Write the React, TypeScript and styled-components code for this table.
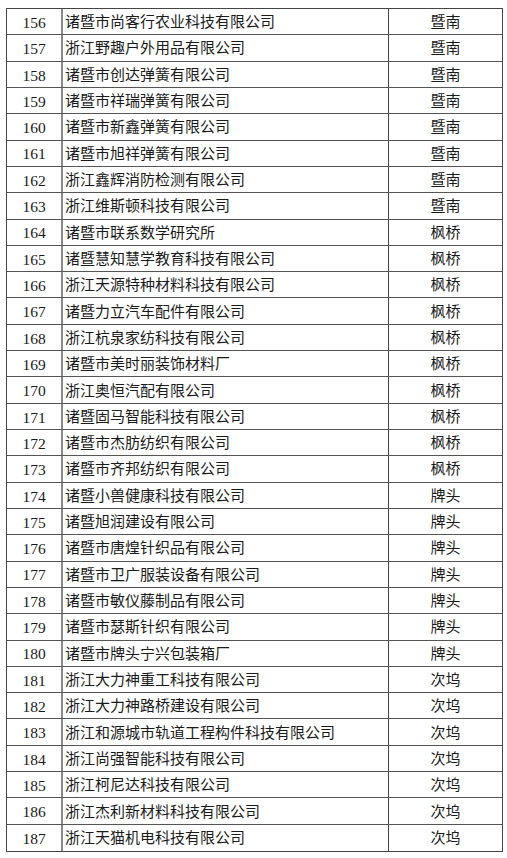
import React from "react";
import styled, { createGlobalStyle } from "styled-components";

const Global = createGlobalStyle`
  html, body { margin: 0; padding: 0; background: #ffffff; }
  body { font-family: "Liberation Serif", "Noto Sans CJK SC", serif; color: #1a1a1a; }
`;

const rows: [number, string, string][] = [
  [156, "诸暨市尚客行农业科技有限公司", "暨南"],
  [157, "浙江野趣户外用品有限公司", "暨南"],
  [158, "诸暨市创达弹簧有限公司", "暨南"],
  [159, "诸暨市祥瑞弹簧有限公司", "暨南"],
  [160, "诸暨市新鑫弹簧有限公司", "暨南"],
  [161, "诸暨市旭祥弹簧有限公司", "暨南"],
  [162, "浙江鑫辉消防检测有限公司", "暨南"],
  [163, "浙江维斯顿科技有限公司", "暨南"],
  [164, "诸暨市联系数学研究所", "枫桥"],
  [165, "诸暨慧知慧学教育科技有限公司", "枫桥"],
  [166, "浙江天源特种材料科技有限公司", "枫桥"],
  [167, "诸暨力立汽车配件有限公司", "枫桥"],
  [168, "浙江杭泉家纺科技有限公司", "枫桥"],
  [169, "诸暨市美时丽装饰材料厂", "枫桥"],
  [170, "浙江奥恒汽配有限公司", "枫桥"],
  [171, "诸暨固马智能科技有限公司", "枫桥"],
  [172, "诸暨市杰肪纺织有限公司", "枫桥"],
  [173, "诸暨市齐邦纺织有限公司", "枫桥"],
  [174, "诸暨小兽健康科技有限公司", "牌头"],
  [175, "诸暨旭润建设有限公司", "牌头"],
  [176, "诸暨市唐煌针织品有限公司", "牌头"],
  [177, "诸暨市卫广服装设备有限公司", "牌头"],
  [178, "诸暨市敏仪藤制品有限公司", "牌头"],
  [179, "诸暨市瑟斯针织有限公司", "牌头"],
  [180, "诸暨市牌头宁兴包装箱厂", "牌头"],
  [181, "浙江大力神重工科技有限公司", "次坞"],
  [182, "浙江大力神路桥建设有限公司", "次坞"],
  [183, "浙江和源城市轨道工程构件科技有限公司", "次坞"],
  [184, "浙江尚强智能科技有限公司", "次坞"],
  [185, "浙江柯尼达科技有限公司", "次坞"],
  [186, "浙江杰利新材料科技有限公司", "次坞"],
  [187, "浙江天猫机电科技有限公司", "次坞"],
];

const Page = styled.div`
  padding: 8px 0 0 6px;
`;

const Table = styled.div`
  width: 497px;
  height: 844px;
  box-sizing: border-box;
  border: 1px solid #444;
  display: grid;
  grid-template-rows: repeat(32, 1fr);
`;

const Row = styled.div<{ $last?: boolean }>`
  display: grid;
  grid-template-columns: 56px 326px 1fr;
  border-bottom: ${(p) => (p.$last ? "none" : "1px solid #555")};
  min-height: 0;
`;

const Cell = styled.div<{ $align: "left" | "center"; $divider?: "thick" | "thin" | "none" }>`
  display: flex;
  align-items: center;
  justify-content: ${(p) => (p.$align === "center" ? "center" : "flex-start")};
  padding-left: ${(p) => (p.$align === "left" ? "2px" : "0")};
  padding-top: 2px;
  font-size: 15px;
  line-height: 1;
  white-space: nowrap;
  overflow: hidden;
  border-right: ${(p) =>
    p.$divider === "thick" ? "2px solid #8a8a8a" : p.$divider === "thin" ? "1px solid #444" : "none"};
`;

const Num = styled(Cell)`
  font-family: "Liberation Serif", serif;
  font-size: 15.5px;
`;

export default function App() {
  return (
    <>
      <Global />
      <Page>
        <Table>
          {rows.map(([n, name, area], i) => (
            <Row key={n} $last={i === rows.length - 1}>
              <Num $align="center" $divider="thick">{n}</Num>
              <Cell $align="left" $divider="thin">{name}</Cell>
              <Cell $align="center" $divider="none">{area}</Cell>
            </Row>
          ))}
        </Table>
      </Page>
    </>
  );
}
